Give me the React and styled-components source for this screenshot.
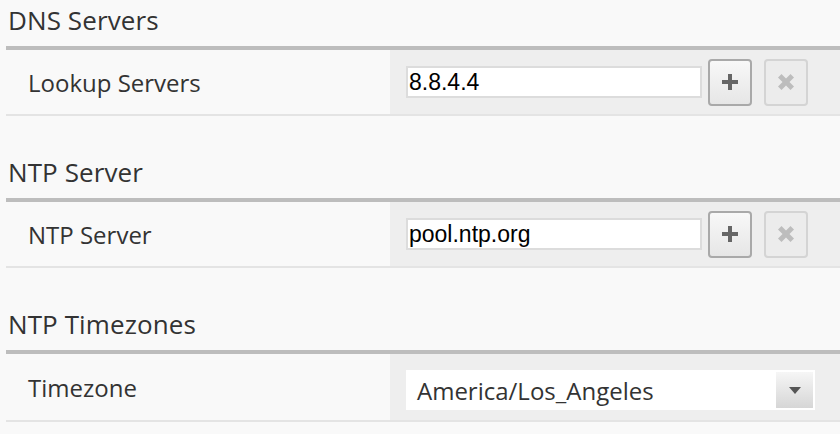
import styled, { createGlobalStyle } from "styled-components";

const Global = createGlobalStyle`
  html, body {
    margin: 0;
    background: #f9f9f9;
    font-family: "Open Sans", "DejaVu Sans", sans-serif;
  }
`;

const Page = styled.div`
  padding: 0 0 0 6px;
`;

const Section = styled.section`
  margin-bottom: 36px;
`;

const Title = styled.h3`
  margin: 0;
  height: 40px;
  padding: 0 0 6px 2px;
  display: flex;
  align-items: center;
  font-size: 26px;
  font-weight: 400;
  letter-spacing: 0.1px;
  color: #333;
  border-bottom: 4px solid #bdbdbd;
  box-sizing: content-box;
`;

const Row = styled.div`
  display: grid;
  grid-template-columns: 384px 1fr;
  min-height: ${(p) => p.$h || 64}px;
  border-bottom: 2px solid #e4e4e4;
`;

const Label = styled.div`
  display: flex;
  align-items: center;
  padding-left: 22px;
  font-size: 24px;
  color: #333;
`;

const Value = styled.div`
  display: flex;
  align-items: center;
  background: #eeeeee;
  padding: 0 16px;
`;

const TextInput = styled.input`
  width: 296px;
  height: 32px;
  box-sizing: border-box;
  border: 2px solid #dcdcdc;
  background: #fff;
  padding: 0 1px;
  font-family: "Liberation Sans", Arial, sans-serif;
  font-size: 23px;
  color: #000;
  outline: none;
`;

const Btn = styled.button`
  width: 44px;
  height: 47px;
  margin-left: ${(p) => p.$ml || 0}px;
  box-sizing: border-box;
  border: 2px solid ${(p) => (p.disabled ? "#d4d4d4" : "#a9a9a9")};
  border-radius: 4px;
  background: ${(p) =>
    p.disabled ? "#ececec" : "linear-gradient(#f8f8f8, #e6e6e6)"};
  display: flex;
  align-items: center;
  justify-content: center;
  padding: 0;
  color: ${(p) => (p.disabled ? "#bdbdbd" : "#666")};
`;

const Select = styled.div`
  width: 409px;
  height: 40px;
  box-sizing: border-box;
  background: #fff;
  margin-top: 6px;
  display: flex;
  align-items: center;
  padding: 2px 2px 2px 11px;
  font-size: 24px;
  color: #333;
`;

const SelectText = styled.span`
  flex: 1;
`;

const Arrow = styled.div`
  width: 37px;
  height: 36px;
  background: linear-gradient(#f6f6f6, #d6d6d6);
  display: flex;
  align-items: center;
  justify-content: center;
`;

const Plus = () => (
  <svg width="16" height="16" viewBox="0 0 16 16">
    <path d="M6 0h4v6h6v4h-6v6H6v-6H0V6h6z" fill="currentColor" />
  </svg>
);

const Cross = () => (
  <svg width="16" height="16" viewBox="0 0 16 16">
    <path d="M0 3.5L3.5 0 8 4.5 12.5 0 16 3.5 11.5 8 16 12.5 12.5 16 8 11.5 3.5 16 0 12.5 4.5 8z" fill="currentColor" />
  </svg>
);

const Caret = () => (
  <svg width="12" height="7" viewBox="0 0 12 7">
    <path d="M0 0h12L6 7z" fill="#555" />
  </svg>
);

const ListRow = ({ label, value }) => (
  <Row>
    <Label>{label}</Label>
    <Value>
      <TextInput defaultValue={value} />
      <Btn $ml={6}>
        <Plus />
      </Btn>
      <Btn $ml={12} disabled>
        <Cross />
      </Btn>
    </Value>
  </Row>
);

export default function App() {
  return (
    <Page>
      <Global />
      <Section>
        <Title>DNS Servers</Title>
        <ListRow label="Lookup Servers" value="8.8.4.4" />
      </Section>
      <Section>
        <Title>NTP Server</Title>
        <ListRow label="NTP Server" value="pool.ntp.org" />
      </Section>
      <Section>
        <Title>NTP Timezones</Title>
        <Row $h={66}>
          <Label>Timezone</Label>
          <Value>
            <Select>
              <SelectText>America/Los_Angeles</SelectText>
              <Arrow>
                <Caret />
              </Arrow>
            </Select>
          </Value>
        </Row>
      </Section>
    </Page>
  );
}
